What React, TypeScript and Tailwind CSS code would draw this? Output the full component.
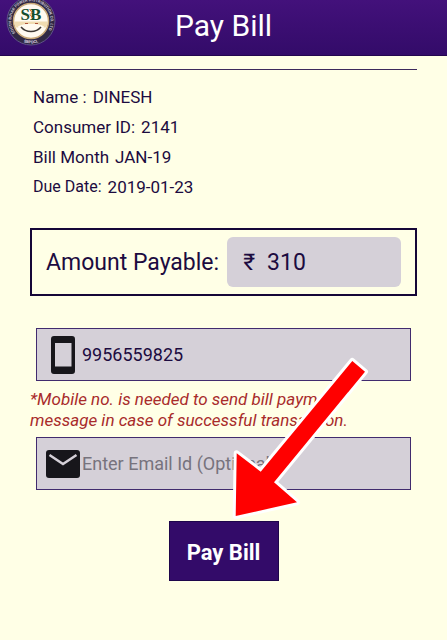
import type { ReactNode } from "react";

const details = [
  { label: "Name :", value: "DINESH" },
  { label: "Consumer ID:", value: "2141" },
  { label: "Bill Month", value: "JAN-19" },
  { label: "Due Date:", value: "2019-01-23", small: true },
];

function Logo() {
  return (
    <svg viewBox="0 0 50 50" className="size-[50px]" role="img" aria-label="SB">
      <defs>
        <path id="ring-top" d="M 9.500 37 A 19.700 19.700 0 1 1 40.500 37" />
        <path id="ring-bottom" d="M 14 44.500 A 22.500 22.500 0 0 0 36 44.500" />
      </defs>
      <circle cx="25" cy="25" r="24" fill="#2f2844" stroke="#5f5488" strokeWidth="1" />
      <circle cx="25" cy="25" r="17.500" fill="#fffaf0" stroke="#c9a978" strokeWidth="1.500" />
      <path d="M8.500 25.500h33a17 17 0 0 1-1.200 6h-30.600a17 17 0 0 1-1.200-6z" fill="#f0dcb2" />
      <path d="M12 30.500c3-2 7-2.500 13-2.500s10 .500 13 2.500c-2 6-7 10-13 10s-11-4-13-10z" fill="#fffaf0" />
      <path d="M15 31c5 6 15 6 20 0" fill="none" stroke="#3d3834" strokeWidth="1.500" />
      <path d="M19 27.500h3M29 27.500h3" stroke="#b0533a" strokeWidth="1.200" />
      <text
        x="25"
        y="23.500"
        textAnchor="middle"
        fontSize="17"
        fontWeight="700"
        fill="#174d2e"
        fontFamily="Liberation Serif, serif"
      >
        SB
      </text>
      <path d="M23.500 13l2.500 3.500-2 2 2.500 3.500" fill="none" stroke="#d0662e" strokeWidth="1" />
      <text fontSize="4" fontWeight="700" fill="#c9c2d2" fontFamily="Roboto, sans-serif">
        <textPath href="#ring-top">SOUTH BIHAR POWER DISTRIBUTION CO. LTD</textPath>
      </text>
      <text fontSize="4" fontWeight="700" fill="#ddd6e2" fontFamily="Roboto, sans-serif">
        <textPath href="#ring-bottom" startOffset="4">
          SBPDCL
        </textPath>
      </text>
    </svg>
  );
}

function PhoneIcon() {
  return (
    <svg viewBox="0 0 24 38" className="h-[38px] w-6" role="img" aria-label="Mobile number">
      <path
        fill="#17161b"
        fillRule="evenodd"
        d="M3 0h18a3 3 0 0 1 3 3v32a3 3 0 0 1-3 3H3a3 3 0 0 1-3-3V3a3 3 0 0 1 3-3zM4 7v23.500h16.500V7z"
      />
    </svg>
  );
}

function MailIcon() {
  return (
    <svg viewBox="0 0 34 28" className="h-7 w-[34px]" role="img" aria-label="Email">
      <rect width="34" height="28" rx="3" fill="#17161b" />
      <path d="M3.500 5L17 14l13.500-9" fill="none" stroke="#d5d0d8" strokeWidth="2.500" />
    </svg>
  );
}

function Field({ id, icon, children }: { id: string; icon: ReactNode; children: ReactNode }) {
  return (
    <div className="mx-1.5 flex h-[53px] items-center border border-[#412b6e] bg-[#d5d0d8] pl-2">
      <label htmlFor={id} className="mr-px flex w-9 shrink-0 justify-center">
        {icon}
      </label>
      {children}
    </div>
  );
}

function Arrow() {
  return (
    <svg
      viewBox="0 0 140 165"
      className="pointer-events-none absolute right-12 -bottom-[30px] h-[165px] w-[140px]"
      aria-hidden="true"
    >
      <path
        d="M6.700 161L7.700 98.300L31.700 116.700L123.300 6L136 16.700L45 127.300L68 147.300z"
        fill="#ff0000"
        stroke="#ffffff"
        strokeWidth="6"
        strokeLinejoin="round"
        paintOrder="stroke"
      />
    </svg>
  );
}

export default function App() {
  return (
    <div className="min-h-screen bg-[#ffffe6] font-[Roboto,'Noto_Sans',sans-serif] text-[#1c0b40]">
      <header className="relative flex h-14 items-center justify-center border-b border-[#24064f] bg-linear-to-b from-[#43117b] to-[#330b69] pb-1">
        <div className="absolute -top-1 left-1.5">
          <Logo />
        </div>
        <h1 className="text-[30px] leading-9 text-white">Pay Bill</h1>
      </header>

      <main className="px-[30px] pt-[13px]">
        <hr className="border-[#3d2a5c]" />

        <dl className="mt-3 pl-[3px] text-[17px] leading-[30px]">
          {details.map(({ label, value, small }) => (
            <div key={label} className="flex gap-1.5">
              <dt className={small ? "text-[16px]" : ""}>{label}</dt>
              <dd>{value}</dd>
            </div>
          ))}
        </dl>

        <section className="mt-[26px] flex h-[68px] items-center border-2 border-[#150638] px-3.5 text-[23px] leading-8">
          <span className="shrink-0 pt-0.5">Amount Payable:</span>
          <output className="ml-2 flex h-[50px] flex-1 items-center gap-3 rounded-md bg-[#d5d0d8] pt-0.5 pl-4">
            <span>₹</span>
            <span>310</span>
          </output>
        </section>

        <form className="mt-8" onSubmit={(event) => event.preventDefault()}>
          <div className="relative">
            <Field id="mobile" icon={<PhoneIcon />}>
              <input
                id="mobile"
                type="tel"
                defaultValue="9956559825"
                aria-describedby="mobile-note"
                className="h-full min-w-0 flex-1 bg-transparent text-[18px] outline-none"
              />
            </Field>
            <p id="mobile-note" className="mt-2 text-[17px] leading-[21px] text-[#a82b2b] italic">
              *Mobile no. is needed to send bill payment
              <br />
              message in case of successful transaction.
            </p>
            <div className="mt-1.5">
              <Field id="email" icon={<MailIcon />}>
                <input
                  id="email"
                  type="email"
                  placeholder="Enter Email Id (Optional)"
                  className="h-full min-w-0 flex-1 bg-transparent text-[18px] outline-none placeholder:text-[#77737d]"
                />
              </Field>
            </div>
            <Arrow />
          </div>
          <button
            type="submit"
            className="mx-auto mt-[31px] block h-[60px] w-[110px] border border-[#1e064b] bg-[#330b69] pt-0.5 text-[22px] font-bold text-white"
          >
            Pay Bill
          </button>
        </form>
      </main>
    </div>
  );
}
